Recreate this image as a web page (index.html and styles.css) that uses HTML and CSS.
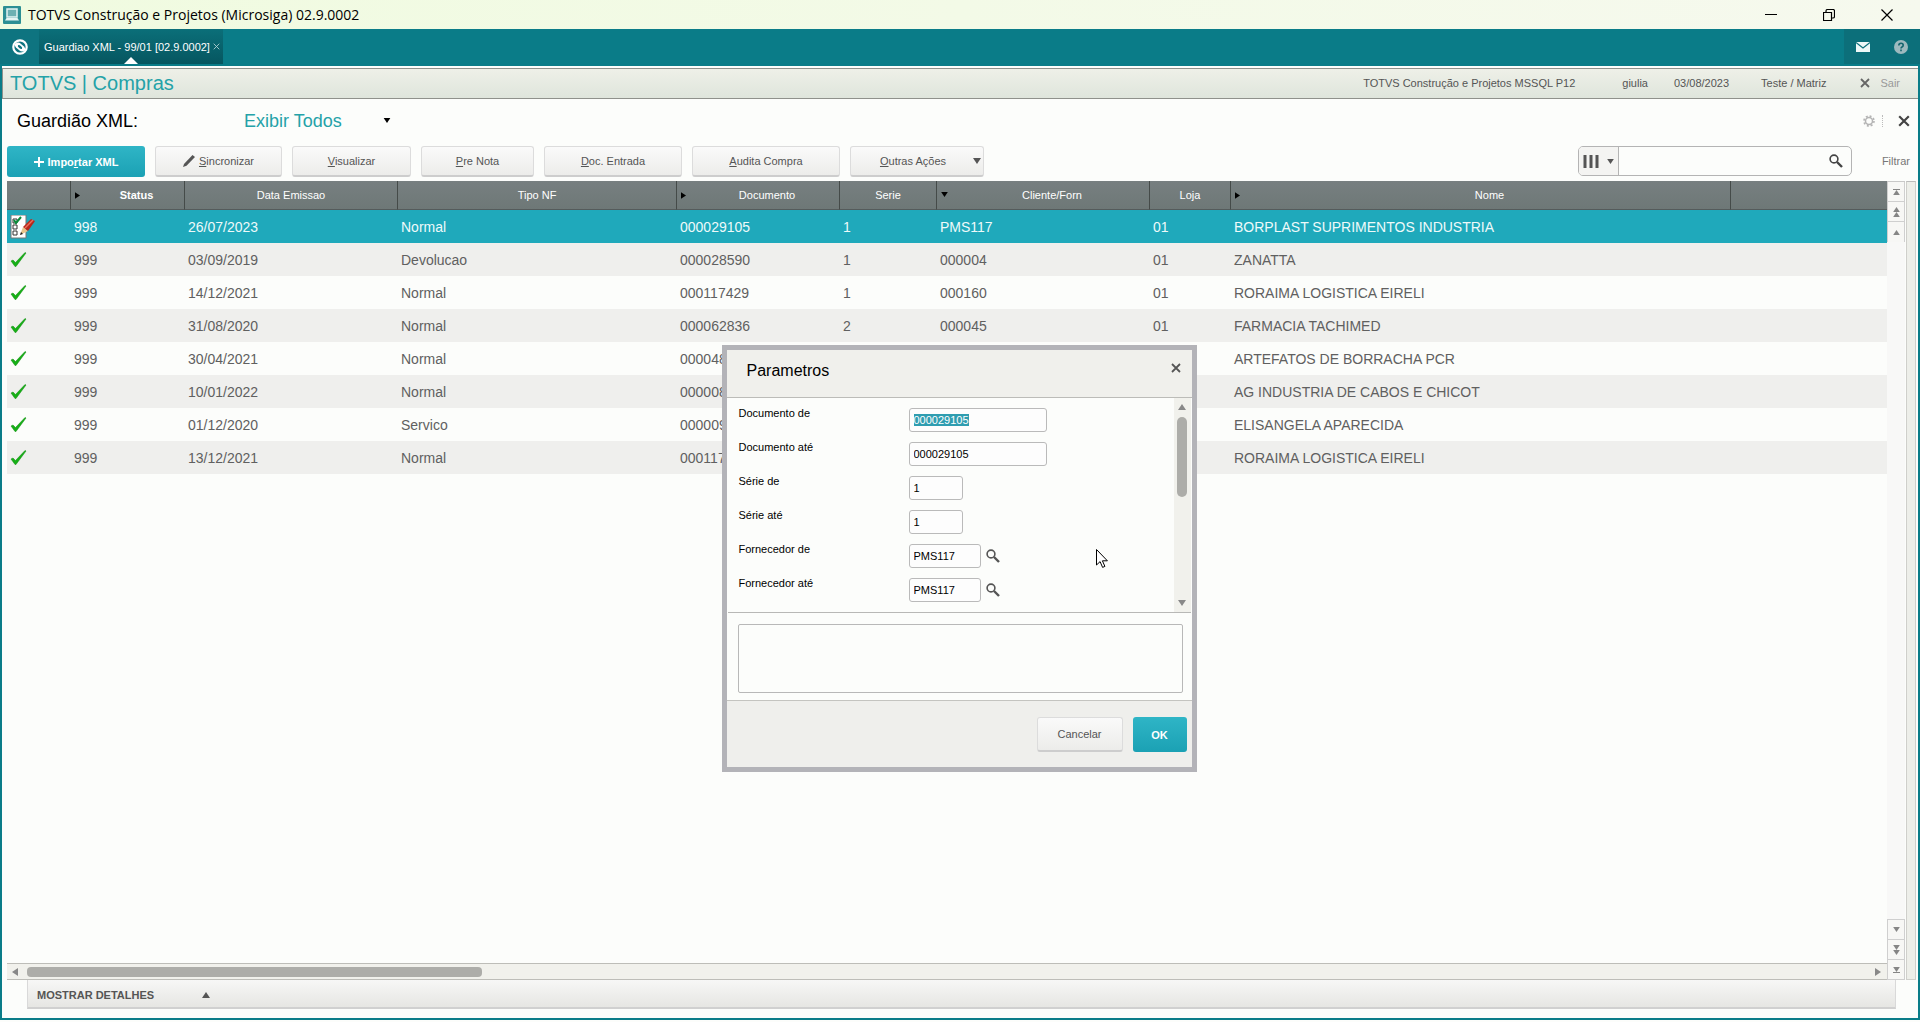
FILE: index.html
```html
<!DOCTYPE html>
<html lang="pt-BR">
<head>
  <meta charset="UTF-8">
  <meta name="viewport" content="width=device-width, initial-scale=1.0">
  <title>TOTVS Construção e Projetos (Microsiga) 02.9.0002</title>
  <link rel="stylesheet" href="styles.css">
</head>
<body>
  <!-- ícones reutilizados -->
  <svg class="sprite" aria-hidden="true">
    <symbol id="i-check" viewBox="0 0 17 17">
      <path d="M1 10l2-1 2.500 2.500L15 1.500l1 .5L6 15.500H5z" fill="#16b016" stroke="#128a12" stroke-width=".5"/>
    </symbol>
    <symbol id="i-x" viewBox="0 0 10 10">
      <path d="M1 1l8 8M9 1L1 9" fill="none" stroke="currentColor" stroke-width="1.800"/>
    </symbol>
    <symbol id="i-lupa" viewBox="0 0 14 14">
      <circle cx="5" cy="5" r="3.900" fill="none" stroke="currentColor" stroke-width="1.600"/>
      <path d="M8 8l5 5" stroke="currentColor" stroke-width="2.400"/>
    </symbol>
    <symbol id="i-up" viewBox="0 0 8 6"><path d="M0 6l4-6 4 6z" fill="currentColor"/></symbol>
    <symbol id="i-down" viewBox="0 0 8 6"><path d="M0 0h8L4 6z" fill="currentColor"/></symbol>
    <symbol id="i-left" viewBox="0 0 6 8"><path d="M6 0v8L0 4z" fill="currentColor"/></symbol>
    <symbol id="i-right" viewBox="0 0 6 8"><path d="M0 0l6 4-6 4z" fill="currentColor"/></symbol>
  </svg>

  <!-- barra da janela -->
  <div class="titlebar">
    <svg class="app-icon" viewBox="0 0 18 18">
      <rect width="18" height="18" rx="1" fill="#2c8f94"/>
      <rect x="4" y="3" width="10" height="8" fill="#6db0b2" stroke="#e4f4f2" stroke-width="1.500"/>
      <path d="M2 14.500h14l-1.500-2.500h-11z" fill="#e4f4f2"/>
    </svg>
    <span class="titlebar-text">TOTVS Construção e Projetos (Microsiga) 02.9.0002</span>
    <div class="window-buttons">
      <button aria-label="Minimizar"><svg viewBox="0 0 12 12"><path d="M0 5.500h12" stroke="#000"/></svg></button>
      <button aria-label="Restaurar"><svg viewBox="0 0 12 12"><path d="M.5 3.500h8v8h-8zM3 3V2q0-1.500 1.500-1.500H10q1.500 0 1.500 1.500v5.500Q11.500 9 10 9H9" fill="none" stroke="#000" stroke-width="1.200"/></svg></button>
      <button aria-label="Fechar"><svg viewBox="0 0 12 12"><path d="M.5.5l11 11M11.500.5l-11 11" stroke="#000" stroke-width="1.200"/></svg></button>
    </div>
  </div>

  <!-- abas -->
  <nav class="tabs">
    <button class="home" aria-label="Início">
      <svg viewBox="0 0 16 16">
        <circle cx="8" cy="8" r="6.700" fill="none" stroke="#fff" stroke-width="2.200"/>
        <path d="M3 5q3-2.500 5.500-.5l3.500 3q2 2 1 4-3 2-5.500 0l-3.500-3Q2.500 7 3 5z" fill="#fff"/>
        <ellipse cx="8" cy="8" rx="2.600" ry="1.300" fill="#0e7480" transform="rotate(40 8 8)"/>
      </svg>
    </button>
    <div class="tab">
      <a href="#">Guardiao XML - 99/01 [02.9.0002]</a>
      <button aria-label="Fechar aba"><svg viewBox="0 0 10 10"><path d="M1 1l8 8M9 1L1 9" stroke="currentColor" stroke-width="1.200"/></svg></button>
    </div>
    <div class="tab-tools">
      <button aria-label="Mensagens">
        <svg width="14" height="10" viewBox="0 0 14 10"><path d="M0 0h14v10H0z" fill="#eef8f8"/><path d="M0 .5l7 5.500 7-5.500" fill="none" stroke="#0c6f7a" stroke-width="1.200"/></svg>
      </button>
      <button aria-label="Ajuda">
        <svg width="14" height="14" viewBox="0 0 14 14"><circle cx="7" cy="7" r="7" fill="#9db9be"/><path d="M4.800 5.500q0-2.300 2.200-2.300t2.200 2q0 1.200-1.200 1.800-1 .5-1 1.500M7 9.600v1.600" fill="none" stroke="#14646e" stroke-width="1.600"/></svg>
      </button>
    </div>
  </nav>

  <div class="frame">
    <header class="module">
      <h1>TOTVS | Compras</h1>
      <span class="env">TOTVS Construção e Projetos MSSQL P12</span>
      <span class="user">giulia</span>
      <span class="date">03/08/2023</span>
      <span class="branch">Teste / Matriz</span>
      <button class="exit"><svg><use href="#i-x"/></svg>Sair</button>
    </header>

    <main class="workspace">
      <div class="browse-head">
        <label for="view">Guardião XML:</label>
        <div class="view-select">
          <select id="view"><option>Exibir Todos</option></select>
          <svg><use href="#i-down"/></svg>
        </div>
        <div class="browse-tools">
          <button class="gear" aria-label="Configurações">
            <svg viewBox="0 0 12 12"><circle cx="6" cy="6" r="3.500" fill="none" stroke="#b4b4b4" stroke-width="1.500"/><circle cx="6" cy="6" r="5" fill="none" stroke="#b4b4b4" stroke-width="1.600" stroke-dasharray="2 1.930"/></svg>
          </button>
          <button class="close" aria-label="Fechar"><svg><use href="#i-x"/></svg></button>
        </div>
      </div>

      <div class="toolbar">
        <button class="btn primary w-import"><svg width="10" height="10" viewBox="0 0 10 10"><path d="M5 0v10M0 5h10" stroke="#fff" stroke-width="2"/></svg><span>Impo<u>r</u>tar XML</span></button>
        <button class="btn w-sync"><svg width="12" height="12" viewBox="0 0 12 12"><path d="M0 12l1-3L9.500 0 12 2 3.500 10.800z" fill="#555"/></svg><span><u>S</u>incronizar</span></button>
        <button class="btn w-view"><span><u>V</u>isualizar</span></button>
        <button class="btn w-pre"><span><u>P</u>re Nota</span></button>
        <button class="btn w-doc"><span><u>D</u>oc. Entrada</span></button>
        <button class="btn w-audit"><span><u>A</u>udita Compra</span></button>
        <button class="btn w-more"><span><u>O</u>utras Ações</span><svg class="caret" width="8" height="6"><use href="#i-down"/></svg></button>

        <div class="search">
          <button class="search-cols" aria-label="Colunas">
            <svg width="16" height="13" viewBox="0 0 16 13"><path d="M2 0v13M8 0v13M14 0v13" stroke="#555" stroke-width="3"/></svg>
            <svg width="7" height="5"><use href="#i-down"/></svg>
          </button>
          <input type="text" aria-label="Pesquisar">
          <button class="search-go" aria-label="Buscar"><svg width="14" height="14"><use href="#i-lupa"/></svg></button>
        </div>
        <a class="filter" href="#">Filtrar</a>
      </div>

      <div class="browse">
        <div class="grid">
          <table>
            <colgroup>
              <col class="c-icon"><col class="c-status"><col class="c-date"><col class="c-type"><col class="c-doc">
              <col class="c-serie"><col class="c-forn"><col class="c-loja"><col class="c-nome"><col>
            </colgroup>
            <thead>
              <tr>
                <th></th>
                <th class="mark bold"><svg width="5" height="7"><use href="#i-right"/></svg>Status</th>
                <th>Data Emissao</th>
                <th>Tipo NF</th>
                <th class="mark"><svg width="5" height="7"><use href="#i-right"/></svg>Documento</th>
                <th>Serie</th>
                <th class="mark"><svg width="7" height="5"><use href="#i-down"/></svg>Cliente/Forn</th>
                <th>Loja</th>
                <th class="mark"><svg width="5" height="7"><use href="#i-right"/></svg>Nome</th>
                <th></th>
              </tr>
            </thead>
            <tbody>
              <tr class="selected">
                <td>
                  <svg class="note" width="26" height="24" viewBox="0 0 26 24">
                    <path d="M1 0h15v23H1z" fill="#fff" stroke="#777"/>
                    <path d="M3 4h4v4H3zM3 10h4v4H3zM3 16h4v4H3z" fill="none" stroke="#333"/>
                    <path d="M4 5l2 3 5-6" fill="none" stroke="#0a8a3a" stroke-width="2"/>
                    <path d="M10 20l3-8 5 4z" fill="#e8c48a"/>
                    <path d="M13 12l8-8 4 2-7 10z" fill="#b8281c"/>
                    <path d="M15 13l8-8" stroke="#e8705c" stroke-width="1.500"/>
                    <path d="M10 20l1-3 2 2z" fill="#222"/>
                  </svg>
                </td>
                <td>998</td><td>26/07/2023</td><td>Normal</td><td>000029105</td><td>1</td><td>PMS117</td><td>01</td><td>BORPLAST SUPRIMENTOS INDUSTRIA</td><td></td>
              </tr>
              <tr>
                <td><svg class="check"><use href="#i-check"/></svg></td>
                <td>999</td><td>03/09/2019</td><td>Devolucao</td><td>000028590</td><td>1</td><td>000004</td><td>01</td><td>ZANATTA</td><td></td>
              </tr>
              <tr>
                <td><svg class="check"><use href="#i-check"/></svg></td>
                <td>999</td><td>14/12/2021</td><td>Normal</td><td>000117429</td><td>1</td><td>000160</td><td>01</td><td>RORAIMA LOGISTICA EIRELI</td><td></td>
              </tr>
              <tr>
                <td><svg class="check"><use href="#i-check"/></svg></td>
                <td>999</td><td>31/08/2020</td><td>Normal</td><td>000062836</td><td>2</td><td>000045</td><td>01</td><td>FARMACIA TACHIMED</td><td></td>
              </tr>
              <tr>
                <td><svg class="check"><use href="#i-check"/></svg></td>
                <td>999</td><td>30/04/2021</td><td>Normal</td><td>000048</td><td></td><td></td><td></td><td>ARTEFATOS DE BORRACHA PCR</td><td></td>
              </tr>
              <tr>
                <td><svg class="check"><use href="#i-check"/></svg></td>
                <td>999</td><td>10/01/2022</td><td>Normal</td><td>000008</td><td></td><td></td><td></td><td>AG INDUSTRIA DE CABOS E CHICOT</td><td></td>
              </tr>
              <tr>
                <td><svg class="check"><use href="#i-check"/></svg></td>
                <td>999</td><td>01/12/2020</td><td>Servico</td><td>000009</td><td></td><td></td><td></td><td>ELISANGELA APARECIDA</td><td></td>
              </tr>
              <tr>
                <td><svg class="check"><use href="#i-check"/></svg></td>
                <td>999</td><td>13/12/2021</td><td>Normal</td><td>000117</td><td></td><td></td><td></td><td>RORAIMA LOGISTICA EIRELI</td><td></td>
              </tr>
            </tbody>
          </table>
          <div class="hscroll">
            <svg width="6" height="8"><use href="#i-left"/></svg>
            <div class="hscroll-track"><div class="hscroll-thumb"></div></div>
            <svg width="6" height="8"><use href="#i-right"/></svg>
          </div>
        </div>
        <div class="pager">
          <button class="first" aria-label="Primeiro"><svg><use href="#i-up"/></svg></button>
          <button aria-label="Página anterior"><svg><use href="#i-up"/></svg><svg><use href="#i-up"/></svg></button>
          <button class="single" aria-label="Anterior"><svg><use href="#i-up"/></svg></button>
          <div class="pager-gap"></div>
          <button aria-label="Próximo"><svg><use href="#i-down"/></svg></button>
          <button aria-label="Próxima página"><svg><use href="#i-down"/></svg><svg><use href="#i-down"/></svg></button>
          <button class="last" aria-label="Último"><svg><use href="#i-down"/></svg></button>
        </div>
        <div class="rail"></div>
      </div>

      <button class="details"><span>MOSTRAR DETALHES</span><svg width="8" height="6"><use href="#i-up"/></svg></button>

      <!-- janela de parâmetros -->
      <div class="overlay">
        <form class="dialog">
          <div class="dialog-head">
            <h2>Parametros</h2>
            <button type="button" aria-label="Fechar"><svg><use href="#i-x"/></svg></button>
          </div>
          <div class="dialog-body">
            <div class="fields">
              <div class="field"><label for="doc-de">Documento de</label><input type="text" id="doc-de" class="lg" value="000029105"></div>
              <div class="field"><label for="doc-ate">Documento até</label><input type="text" id="doc-ate" class="lg" value="000029105"></div>
              <div class="field"><label for="serie-de">Série de</label><input type="text" id="serie-de" class="sm" value="1"></div>
              <div class="field"><label for="serie-ate">Série até</label><input type="text" id="serie-ate" class="sm" value="1"></div>
              <div class="field"><label for="forn-de">Fornecedor de</label><input type="text" id="forn-de" class="md" value="PMS117"><button type="button" aria-label="Pesquisar fornecedor"><svg><use href="#i-lupa"/></svg></button></div>
              <div class="field"><label for="forn-ate">Fornecedor até</label><input type="text" id="forn-ate" class="md" value="PMS117"><button type="button" aria-label="Pesquisar fornecedor"><svg><use href="#i-lupa"/></svg></button></div>
            </div>
            <div class="vscroll">
              <svg width="8" height="6"><use href="#i-up"/></svg>
              <div class="vscroll-track"><div class="vscroll-thumb"></div></div>
              <svg width="8" height="6"><use href="#i-down"/></svg>
            </div>
          </div>
          <div class="help"><textarea aria-label="Ajuda do campo" readonly></textarea></div>
          <div class="dialog-foot">
            <button type="button" class="btn w-cancel">Cancelar</button>
            <button type="button" class="btn primary w-ok">OK</button>
          </div>
          <svg class="cursor" viewBox="0 0 12 19"><path d="M.5.500v15.500l3.600-3.400 2.500 5.800 2.300-1-2.500-5.600h5z" fill="#fff" stroke="#000"/></svg>
        </form>
      </div>
    </main>
  </div>

  <script>
    // o primeiro campo abre com o conteúdo selecionado
    const firstField = document.getElementById('doc-de');
    firstField.focus();
    firstField.select();
  </script>
</body>
</html>
```
FILE: styles.css
```css
* {
  box-sizing: border-box;
}
body {
  margin: 0;
  height: 100vh;
  display: flex;
  flex-direction: column;
  overflow: hidden;
  background: #fcfdfb;
  color: #555;
  font-family: "Liberation Sans", Arial, sans-serif;
  font-size: 11px;
  line-height: 14px;
}
button, input, select, textarea {
  font: inherit;
  color: inherit;
}
button {
  padding: 0;
  border: 0;
  background: none;
  display: flex;
  align-items: center;
  justify-content: center;
}
a {
  color: inherit;
  text-decoration: none;
}
h1, h2 {
  margin: 0;
  font-weight: normal;
}
.sprite {
  display: none;
}

/* barra da janela */
.titlebar {
  height: 29px;
  flex: none;
  display: flex;
  align-items: center;
  padding-left: 3px;
  background: linear-gradient(90deg, #f0fbe0, #f6f9ee);
  color: #000;
}
.app-icon {
  width: 18px;
  height: 18px;
}
.titlebar-text {
  margin-left: 7px;
  font-family: "Open Sans", "Noto Sans", sans-serif;
  font-size: 14px;
  line-height: 20px;
}
.window-buttons {
  display: flex;
  margin-left: auto;
  margin-right: 4px;
}
.window-buttons button {
  width: 58px;
  height: 28px;
}
.window-buttons svg {
  width: 12px;
  height: 12px;
}

/* abas */
.tabs {
  height: 37px;
  flex: none;
  display: flex;
  background: #0a7c88;
  color: #fff;
}
.home {
  width: 39px;
  height: 35px;
  background: #0e7480;
}
.home svg {
  width: 16px;
  height: 16px;
}
.tab {
  position: relative;
  display: flex;
  align-items: center;
  gap: 3px;
  height: 35px;
  padding: 0 3px 0 5px;
  background: linear-gradient(#0b6f79, #065660);
}
.tab button {
  width: 7px;
  color: #b9d6d9;
}
.tab button svg {
  width: 7px;
  height: 7px;
}
/* seta branca da aba ativa */
.tab::after {
  content: "";
  position: absolute;
  left: 50%;
  bottom: 0;
  margin-left: -7px;
  border: 7px solid transparent;
  border-top: 0;
  border-bottom-color: #fff;
}
.tab-tools {
  display: flex;
  height: 35px;
  margin-left: auto;
  background: #0c6f7a;
}
.tab-tools button {
  width: 38px;
}

.frame {
  flex: 1;
  min-height: 0;
  display: flex;
  flex-direction: column;
  padding-top: 2px;
  margin-bottom: 2px;
  border: 2px solid #0a7c88;
  border-top: 0;
}

/* cabeçalho do módulo */
.module {
  height: 31px;
  flex: none;
  display: flex;
  align-items: center;
  padding: 0 18px 2px 7px;
  border: 1px solid #8f918c;
  border-right: 0;
  background: linear-gradient(#eef0e8, #dfe5dc);
}
.module h1 {
  margin-right: auto;
  font-size: 20px;
  line-height: 24px;
  color: #24a2a8;
}
.user {
  margin-left: 47px;
}
.date {
  margin-left: 26px;
}
.branch {
  margin-left: 32px;
}
.exit {
  gap: 10px;
  margin-left: 34px;
  color: #999;
}
.exit svg {
  width: 10px;
  height: 10px;
  color: #666;
}

/* área de trabalho */
.workspace {
  position: relative;
  flex: 1;
  min-height: 0;
  display: flex;
  flex-direction: column;
  padding: 0 2px 9px 5px;
}
.browse-head {
  height: 47px;
  display: flex;
  align-items: center;
  padding: 0 0 4px 10px;
  font-size: 18px;
  line-height: 22px;
}
.browse-head label {
  width: 227px;
  color: #000;
}
.view-select {
  display: flex;
  align-items: center;
  width: 147px;
  color: #24a2a8;
}
.view-select select {
  flex: 1;
  padding: 0;
  border: 0;
  background: none;
  appearance: none;
}
.view-select svg {
  width: 8px;
  height: 5px;
  color: #000;
}
.browse-tools {
  display: flex;
  margin-left: auto;
}
.gear {
  width: 28px;
  border-right: 1px dotted #bbb;
}
.gear svg {
  width: 12px;
  height: 12px;
}
.close {
  width: 24px;
  margin-left: 9px;
  color: #444;
}
.close svg {
  width: 12px;
  height: 12px;
}

/* botões */
.toolbar {
  display: flex;
  gap: 10px;
  height: 35px;
}
.btn {
  position: relative;
  height: 31px;
  gap: 4px;
  border: 1px solid #dcdcdc;
  border-bottom: 2px solid #cdcdcd;
  border-radius: 3px;
  background: linear-gradient(#fafafa, #ececea);
}
.primary {
  border: 0;
  background: linear-gradient(#2fb5c6, #1ba1b4);
  color: #fff;
  font-weight: bold;
}
.w-import { width: 138px; }
.w-sync { width: 127px; }
.w-view { width: 119px; }
.w-pre { width: 113px; }
.w-doc { width: 138px; }
.w-audit { width: 148px; }
.w-more { width: 134px; padding-right: 8px; }
.w-cancel { width: 86px; }
.w-ok { width: 54px; }
.caret {
  position: absolute;
  right: 2px;
  top: 11px;
}
.search {
  display: flex;
  width: 274px;
  height: 30px;
  margin-left: auto;
  border: 1px solid #b4b4b4;
  border-radius: 5px;
}
.search-cols {
  width: 40px;
  gap: 8px;
  border-right: 1px solid #b4b4b4;
  background: #f4f4f2;
  border-radius: 4px 0 0 4px;
}
.search input {
  flex: 1;
  min-width: 0;
  border: 0;
  background: none;
}
.search-go {
  width: 30px;
  color: #444;
}
.filter {
  align-self: flex-start;
  margin: 8px 6px 0 20px;
  color: #777;
}

/* grade */
.browse {
  flex: 1;
  min-height: 0;
  display: flex;
}
.grid {
  flex: 1;
  display: flex;
  flex-direction: column;
  justify-content: space-between;
}
table {
  width: 100%;
  table-layout: fixed;
  border-collapse: separate;
  border-spacing: 0;
}
.c-icon { width: 64px; }
.c-status { width: 114px; }
.c-date { width: 213px; }
.c-type { width: 279px; }
.c-doc { width: 163px; }
.c-serie { width: 97px; }
.c-forn { width: 213px; }
.c-loja { width: 81px; }
.c-nome { width: 500px; }
th {
  position: relative;
  height: 29px;
  padding: 0;
  border-right: 1px solid #454b49;
  border-bottom: 1px solid #555b5b;
  background: linear-gradient(#777f80, #6e7877);
  color: #fff;
  font-weight: normal;
}
th:last-child {
  border-right: 0;
}
.mark {
  padding-left: 18px;
}
.mark svg {
  position: absolute;
  left: 4px;
  top: 11px;
  color: #000;
}
.bold {
  font-weight: bold;
}
td {
  height: 33px;
  padding: 0 0 0 3px;
  color: #606060;
  font-size: 14px;
  line-height: 16px;
  white-space: nowrap;
}
tbody tr:nth-child(even) {
  background: #efefed;
}
tbody .selected {
  background: #1fa9bb;
}
.selected td {
  color: #eefafa;
}
td svg {
  display: block;
}
.check {
  width: 17px;
  height: 17px;
}

/* barras de rolagem */
.hscroll {
  display: flex;
  align-items: center;
  height: 17px;
  padding: 0 6px 0 5px;
  border-top: 1px solid #bdbdb8;
  border-bottom: 1px solid #bdbdb8;
  background: #f1f1ec;
  color: #888;
}
.hscroll-track {
  flex: 1;
  margin: 0 9px;
}
.hscroll-thumb {
  width: 455px;
  height: 10px;
  border-radius: 4px;
  background: #adada9;
}
.pager {
  width: 18px;
  display: flex;
  flex-direction: column;
  border-top: 1px solid #c8c8c8;
  color: #858585;
}
.pager button {
  flex-direction: column;
  height: 20px;
  border: 1px solid #cfcfcf;
  border-top: 0;
  background: #f7f7f5;
}
.pager .single {
  border-bottom: 0;
}
.pager svg {
  width: 7px;
  height: 5px;
}
.pager .first svg {
  border-top: 1px solid;
  height: 6px;
}
.pager .last svg {
  border-bottom: 1px solid;
  height: 6px;
}
.pager-gap {
  flex: 1;
  border-bottom: 1px solid #cfcfcf;
  background: #f8f8f7;
}
.rail {
  width: 10px;
  margin-left: 1px;
  border: 1px solid #cfcfcb;
  border-top-color: #bbb;
  background: #edeee9;
}
.details {
  height: 29px;
  justify-content: flex-start;
  gap: 48px;
  margin: 0 20px;
  padding: 3px 9px 0;
  border: 1px solid #d9d9d9;
  border-top: 0;
  border-bottom: 2px solid #d0d0d0;
  background: linear-gradient(#f7f7f6, #e6e6e3);
  font-weight: bold;
}

/* janela de parâmetros */
.overlay {
  position: absolute;
  inset: 0 2px 0 0;
  display: flex;
  align-items: center;
  justify-content: center;
}
.dialog {
  position: relative;
  width: 475px;
  border: 5px solid #b3b3b8;
  background: #fcfdfb;
  color: #000;
}
.dialog-head {
  display: flex;
  justify-content: space-between;
  height: 48px;
  padding: 11px 11px 0 20px;
  border-bottom: 1px solid #bcbcb8;
  background: #f0f0ec;
}
.dialog-head h2 {
  font-size: 16px;
  line-height: 20px;
}
.dialog-head button {
  width: 10px;
  height: 14px;
  color: #555;
}
.dialog-head svg {
  width: 10px;
  height: 10px;
}
.dialog-body {
  display: flex;
  height: 215px;
  margin: 0 1px;
  border-bottom: 1px solid #b8b8b6;
}
.fields {
  flex: 1;
  display: flex;
  flex-direction: column;
  gap: 10px;
  padding: 10px 0 0 11px;
}
.field {
  display: flex;
  align-items: flex-start;
  height: 24px;
}
.field label {
  width: 170px;
  line-height: 11px;
}
.field input {
  height: 24px;
  padding: 0 4px;
  border: 1px solid #bababa;
  border-radius: 3px;
  background: #fdfdfd;
  outline: 0;
}
.field input::selection {
  background: #2f9db0;
  color: #fff;
}
.field button {
  width: 14px;
  height: 24px;
  margin-left: 5px;
  color: #555;
}
.field button svg {
  width: 14px;
  height: 14px;
}
.lg { width: 138px; }
.md { width: 72px; }
.sm { width: 54px; }
.vscroll {
  width: 17px;
  display: flex;
  flex-direction: column;
  align-items: center;
  padding: 6px 0;
  background: #f1f1ec;
  color: #888;
}
.vscroll-track {
  flex: 1;
  padding-top: 7px;
}
.vscroll-thumb {
  width: 10px;
  height: 80px;
  border-radius: 5px;
  background: #adada9;
}
.help {
  height: 88px;
  padding: 11px 9px 7px 11px;
  border-bottom: 1px solid #c4c4c0;
}
.help textarea {
  display: block;
  width: 100%;
  height: 69px;
  border: 1px solid #b8b8b8;
  border-radius: 2px;
  background: none;
  resize: none;
}
.dialog-foot {
  display: flex;
  justify-content: flex-end;
  gap: 10px;
  height: 66px;
  padding: 16px 5px 0 0;
  background: #efefec;
}
.dialog-foot .btn {
  height: 35px;
}
.w-cancel {
  color: #555;
}
.cursor {
  position: absolute;
  right: 84px;
  top: 199px;
  width: 12px;
  height: 19px;
}
```
